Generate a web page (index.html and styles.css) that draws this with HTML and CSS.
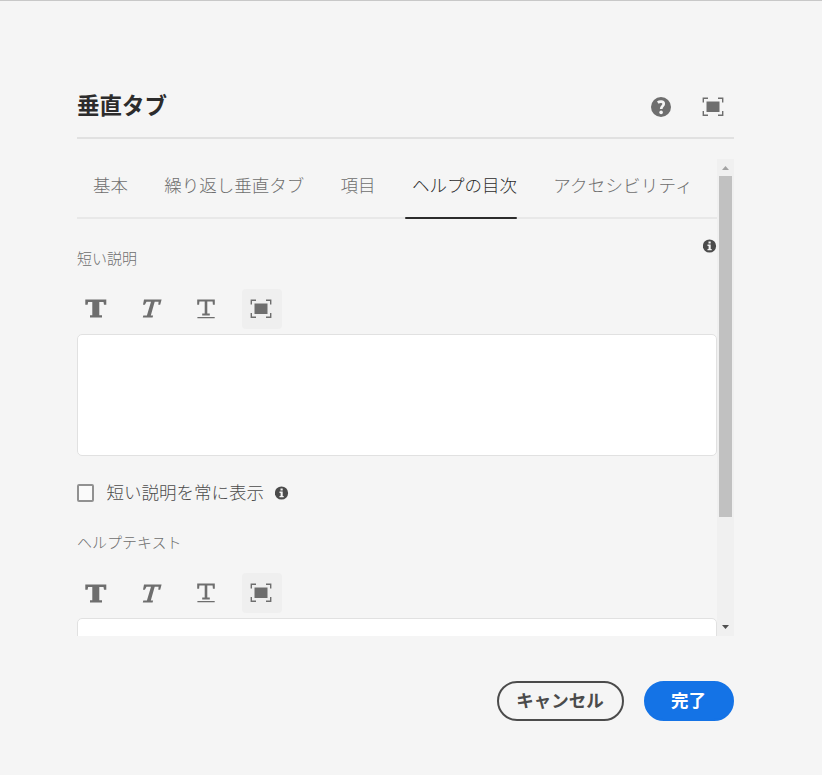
FILE: index.html
```html
<!DOCTYPE html>
<html lang="ja">
<head>
<meta charset="utf-8">
<title>垂直タブ</title>
<link rel="stylesheet" href="styles.css">
</head>
<body>
<svg class="defs" aria-hidden="true">
  <symbol id="full" viewBox="0 0 22 20"><path d="M4.500 4.500h13v10.500h-13z" fill="currentColor"/><path d="M1.300 5.500v-4.200H6M16 1.300h4.700v4.200M20.700 14v4.200H16M6 18.200H1.300V14" fill="none" stroke="currentColor" stroke-width="1.400"/></symbol>
  <symbol id="bold" viewBox="0 0 22 20"><path d="M.3 .5h21v5.200h-2.300L18.500 3H14.300v13.300H17v2.200H5v-2.200h2.300V3H3.100L2.600 5.700H.3z" fill="currentColor"/></symbol>
  <symbol id="italic" viewBox="0 0 22 20"><path d="M4 .5h17.600l-1.400 5.200h-1.900l.3-3h-3.900L10.800 16.500h2.300L12.600 18.500H2.800l.5-2h3.600L11 2.700H6.500L4.900 5.700H3z" fill="currentColor"/></symbol>
  <symbol id="under" viewBox="0 0 22 21"><path d="M2.200 .5h17.600v5.200h-1.900L17.600 2.600H12.300v12h2.500v2H7.200v-2h2.500v-12H4.400l-.3 3.100H2.200zM2.400 18h17.300v1.200H2.400z" fill="currentColor"/></symbol>
  <symbol id="info" viewBox="0 0 14 14"><circle cx="6.500" cy="7" r="6.600" fill="currentColor"/><path d="M5.500 2.400h2.200v2H5.500zM4.500 5.500h3.200v4.400h1v1.400H4.500V9.900h1.100V6.900H4.500z" fill="#f5f5f5"/></symbol>
</svg>
<main class="dialog">
  <header class="header">
    <h1>垂直タブ</h1>
    <svg class="help" viewBox="0 0 20 20"><circle cx="10" cy="10" r="10" fill="currentColor"/><path d="M6.800 5.600C8.200 4.500 12.700 3.900 12.700 6.900c0 2.200-2.500 2.400-2.500 5" fill="none" stroke="#f5f5f5" stroke-width="2.700"/><circle cx="10.100" cy="15.400" r="1.800" fill="#f5f5f5"/></svg>
    <svg class="icon"><use href="#full"/></svg>
  </header>
  <section class="viewport">
    <div class="content">
      <nav class="tabs"><span>基本</span><span>繰り返し垂直タブ</span><span>項目</span><span class="selected">ヘルプの目次</span><span class="wide">アクセシビリティ</span></nav>
      <div class="label-row"><span class="label">短い説明</span><svg class="info"><use href="#info"/></svg></div>
      <div class="toolbar">
        <svg class="icon"><use href="#bold"/></svg><svg class="icon"><use href="#italic"/></svg><svg class="icon under"><use href="#under"/></svg><span class="tool"><svg class="icon"><use href="#full"/></svg></span>
      </div>
      <div class="editor"></div>
      <div class="check-row"><span class="checkbox"></span><span class="check-text">短い説明を常に表示</span><svg class="info"><use href="#info"/></svg></div>
      <div class="label second">ヘルプテキスト</div>
      <div class="toolbar lower">
        <svg class="icon"><use href="#bold"/></svg><svg class="icon"><use href="#italic"/></svg><svg class="icon under"><use href="#under"/></svg><span class="tool"><svg class="icon"><use href="#full"/></svg></span>
      </div>
      <div class="editor"></div>
    </div>
    <div class="scrollbar"><span class="arrow up"></span><span class="thumb"></span><span class="arrow down"></span></div>
  </section>
  <footer class="footer"><button class="cancel">キャンセル</button><button class="done">完了</button></footer>
</main>
</body>
</html>
```
FILE: styles.css
```css
* { box-sizing: border-box; }
body {
  margin: 0;
  height: 775px;
  overflow: hidden;
  background: #f5f5f5;
  border-top: 1px solid #c8c8c8;
  font-family: "Noto Sans CJK JP", sans-serif;
  font-weight: 300;
  color: #6e6e6e;
}
svg { display: block; flex: none; }
.defs { position: absolute; width: 0; height: 0; }
.dialog { width: 657px; margin-left: 77px; padding-top: 74px; }
.header {
  display: flex;
  align-items: center;
  height: 64px;
  border-bottom: 2px solid #e1e1e1;
  padding-right: 10px;
}
h1 { margin: 0 auto 4px 0; font-size: 22.5px; line-height: 32px; font-weight: 700; color: #2c2c2c; }
.help { width: 20px; height: 20px; margin: 2px 31px 0 0; }
.icon { width: 22px; height: 20px; }
.header .icon { margin-top: 2px; }
.viewport { display: flex; height: 477px; margin-top: 20px; overflow: hidden; }
.content { width: 640px; height: 477px; overflow: hidden; }
.tabs {
  display: flex;
  gap: 36.3px;
  height: 60px;
  padding-left: 16px;
  border-bottom: 2px solid #e8e8e8;
  font-size: 17.5px;
  line-height: 52px;
  white-space: nowrap;
}
.tabs span { position: relative; height: 60px; }
.tabs .selected { color: #2c2c2c; }
.tabs .wide { letter-spacing: .2px; }
.selected::after {
  content: "";
  position: absolute;
  left: -6.500px;
  right: 0;
  bottom: 0;
  height: 2px;
  border-radius: 1px;
  background: #2c2c2c;
}
.label-row { display: flex; justify-content: space-between; height: 70px; padding-top: 20px; }
.label { font-size: 15px; line-height: 38px; }
.info { width: 14px; height: 14px; color: #4b4b4b; }
.toolbar { display: flex; align-items: center; height: 40px; padding-left: 8px; gap: 33px; }
.toolbar .under { height: 21px; margin-top: 1px; }
.lower > .icon { margin-top: 1px; }
.tool {
  display: grid;
  place-items: center;
  width: 40px;
  height: 40px;
  margin-left: -8px;
  padding-right: 2px;
  background: #efefef;
  border-radius: 4px;
}
.editor { height: 122px; margin-top: 5px; background: #fff; border: 1px solid #e1e1e1; border-radius: 5px; }
.check-row { display: flex; align-items: center; height: 40px; margin-top: 17px; font-size: 17.5px; color: #4b4b4b; }
.checkbox { width: 17px; height: 18px; margin-right: 12.500px; background: #fafafa; border: 2px solid #919191; border-radius: 2px; }
.check-text { padding-bottom: 4px; }
.check-row .info { margin-left: 10.500px; }
.label.second { height: 60px; line-height: 58px; }
.scrollbar { display: flex; flex-direction: column; align-items: center; width: 17px; background: #f0f0f0; }
.thumb { width: 13px; height: 341px; background: #c1c1c1; }
.arrow { width: 7px; height: 4px; }
.up { margin: 7px 0 6px; background: #a3a3a3; clip-path: polygon(50% 0, 100% 100%, 0 100%); }
.down { margin: auto 0 7px; background: #505050; clip-path: polygon(0 0, 100% 0, 50% 100%); }
.footer { display: flex; justify-content: flex-end; gap: 20px; margin-top: 45px; }
button {
  height: 40px;
  padding: 0 1px 2px 0;
  border: 2px solid #4b4b4b;
  border-radius: 20px;
  font: 700 17.5px/34px "Noto Sans CJK JP", sans-serif;
}
.cancel { width: 127px; background: transparent; color: #4b4b4b; }
.done { width: 90px; background: #1473e6; border-color: #1473e6; color: #fff; }
```
